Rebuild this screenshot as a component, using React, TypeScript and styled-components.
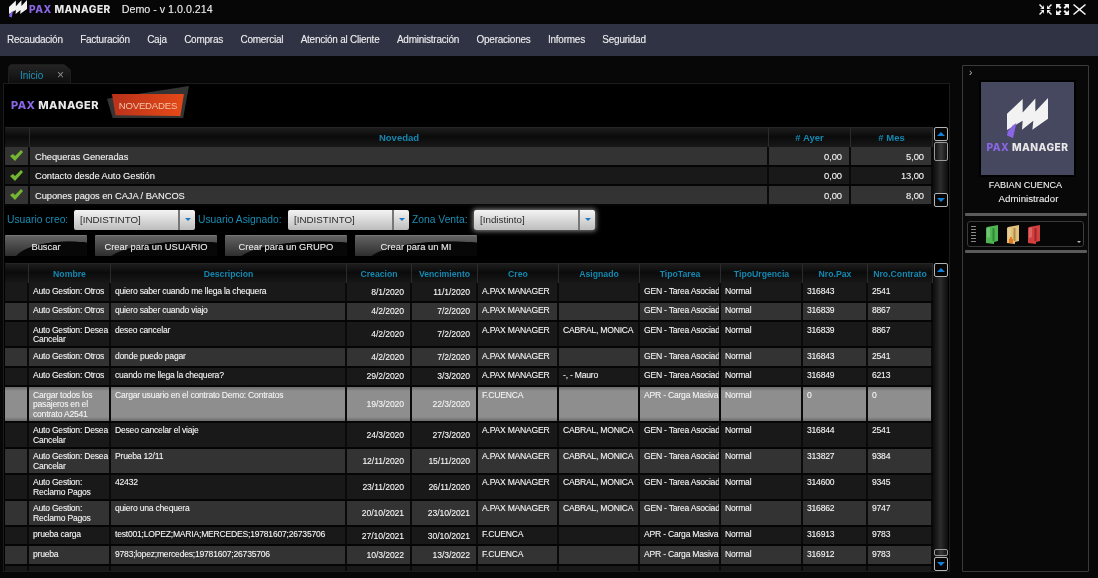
import React from "react";
import styled, { createGlobalStyle } from "styled-components";

const Global = createGlobalStyle`
  html, body { margin: 0; padding: 0; background: #000; }
  body { font-family: "Liberation Sans", Arial, sans-serif; }
  * { box-sizing: border-box; }
`;
const weight = "text-shadow: 0 0 0.7px rgba(255,255,255,.45);";

const Page = styled.div`
  width: 1098px; height: 578px; overflow: hidden; display: flex; flex-direction: column;
  background: #070707; color: #e6e6e6; filter: blur(0.3px);
`;
const TopBar = styled.header`
  height: 24px; flex: none; display: flex; align-items: center; padding: 0 12px 6px 9px; background: #060606;
`;
const Brand = styled.div`
  display: flex; align-items: center; gap: 2px;
`;
const Wordmark = styled.span<{ $size: number; $spacing: number }>`
  font-family: "Inter", sans-serif; font-weight: 800; white-space: nowrap; line-height: 1;
  font-size: ${p => p.$size}px; letter-spacing: ${p => p.$spacing}px; color: #e8e8e8;
  b { color: #8a66e6; font-weight: 800; }
`;
const AppTitle = styled.span`
  margin-left: 11px; font-size: 10.7px; color: #e4e4e4; ${weight}
`;
const WindowButtons = styled.div`
  margin-left: auto; display: flex; align-items: center; gap: 4px;
`;
const Nav = styled.nav`
  height: 32px; flex: none; display: flex; align-items: center; gap: 17.4px; padding: 0 0 2px 7px; background: #2f3344;
`;
const NavItem = styled.span`
  font-size: 10px; letter-spacing: -0.24px; color: #e8e8ea; white-space: nowrap; ${weight}
`;
const Body = styled.div`
  flex: 1; min-height: 0; display: flex; gap: 12px; padding: 8px 9px 6px 3px;
`;
const MainColumn = styled.div`
  width: 947px; flex: none; display: flex; flex-direction: column;
`;
const Tabs = styled.div`
  height: 19px; flex: none; display: flex; padding-left: 5px;
`;
const Tab = styled.div`
  width: 63px; display: flex; align-items: center; justify-content: space-between; padding: 2px 6px 0 11px;
  background: linear-gradient(#242424, #0e0e0e); border: 1px solid #1d1d1d; border-bottom: 0;
  clip-path: polygon(3px 0, 56px 0, 100% 6px, 100% 100%, 0 100%, 0 3px);
`;
const TabLabel = styled.span`
  font-size: 10px; color: #1f93b8;
`;
const TabClose = styled.span`
  font-size: 12px; color: #8e8e8e; line-height: 1;
`;
const Panel = styled.main`
  flex: 1; min-height: 0; display: flex; flex-direction: column; background: #000; border: 1px solid #1c1c1c;
  padding-left: 1px; overflow: hidden;
`;
const LogoRow = styled.div`
  height: 43px; flex: none; display: flex; align-items: center; padding: 0 0 0 6px; gap: 13px;
`;
const Banner = styled.div`
  position: relative; width: 72px; height: 22px; margin-top: -1px; flex: none;
  display: flex; align-items: center; justify-content: center; z-index: 0;
  font-size: 9.6px; letter-spacing: -0.2px; color: #f3c5a8;
  &::before {
    content: ""; position: absolute; z-index: -2; left: -5px; right: -5px; top: -8px; bottom: -2px;
    background: #343434; clip-path: polygon(0 40%, 100% 0, 93% 100%, 7% 100%);
  }
  &::after {
    content: ""; position: absolute; z-index: -1; inset: 0;
    background: linear-gradient(100deg, #b8311a, #e64a17); clip-path: polygon(0 0, 100% 0, 95% 100%, 5% 97%);
  }
`;
const GridWrap = styled.div<{ $height: number }>`
  height: ${p => p.$height}px; flex: none; display: flex;
`;
const GridBody = styled.div`
  width: 928px; flex: none; overflow: hidden; display: flex; flex-direction: column;
`;
const Row = styled.div<{ $cols: string; $tone?: "odd" | "even" | "sel" }>`
  display: grid; grid-template-columns: ${p => p.$cols}; flex: none; border-bottom: 2px solid #050505;
  background: ${p => (p.$tone === "even" ? "#333333" : p.$tone === "sel" ? "linear-gradient(#6a6a6a, #8e8e8e 4px, #8e8e8e calc(100% - 4px), #6a6a6a)" : "#191919")};
`;
const HeadRow = styled(Row)`
  height: 20px; background: linear-gradient(#1d1d1d, #0b0b0b 45%, #181818);
  border-top: 1px solid #252525; border-bottom: 0;
`;
const HeadCell = styled.div`
  display: flex; align-items: center; justify-content: center; border-right: 1px solid #2b2b2b;
  font-size: 8.7px; font-weight: 700; color: #1488b0; white-space: nowrap; overflow: hidden;
`;
const BigHeadCell = styled(HeadCell)`
  font-size: 9.5px;
`;
const Cell = styled.div<{ $right?: boolean; $clip?: boolean }>`
  font-size: 8.6px; letter-spacing: ${p => (p.$right ? "-0.08px" : "-0.23px")};
  line-height: 9.7px; color: #f0f0f0; border-right: 2px solid #0a0a0a; overflow: hidden;
  padding: ${p => (p.$right ? "2px 6px 0 0" : "3.6px 1px 1px 4px")};
  ${p => p.$right && "display:flex; align-items:center; justify-content:flex-end;"}
  ${p => p.$clip && "white-space:nowrap;"}
  min-height: 17.5px; ${weight}
`;
const NewsCell = styled.div<{ $right?: boolean; $check?: boolean }>`
  height: 17.6px; display: flex; align-items: center; font-size: 9.4px; letter-spacing: -0.08px; color: #ececec; border-right: 2px solid #0a0a0a; ${weight}
  justify-content: ${p => (p.$right ? "flex-end" : p.$check ? "center" : "flex-start")};
  padding: ${p => (p.$right ? "1px 7px 0 0" : p.$check ? "0" : "1px 0 0 5px")};
`;
const Scrollbar = styled.div`
  width: 15px; flex: none; display: flex; flex-direction: column; align-items: center;
  background: linear-gradient(90deg, #0c0c0c, #2c2c2c 50%, #0c0c0c);
`;
const ScrollButton = styled.div<{ $down?: boolean }>`
  width: 14px; height: 14px; flex: none; background: #050505; border: 1px solid #b4b4b4; border-radius: 2px;
  display: flex; align-items: center; justify-content: center;
  &::after {
    content: ""; border-left: 4px solid transparent; border-right: 4px solid transparent;
    ${p => (p.$down ? "border-top: 4px solid #1580d8;" : "border-bottom: 4px solid #1580d8;")}
  }
`;
const ScrollThumb = styled.div<{ $height: number }>`
  width: 14px; height: ${p => p.$height}px; flex: none; margin: 1px 0; border: 1px solid #9a9a9a; border-radius: 2px;
  background: linear-gradient(90deg, #111, #3a3a3a 50%, #111);
`;
const Spacer = styled.div`
  flex: 1;
`;
const Filters = styled.div`
  height: 25px; flex: none; display: flex; align-items: center; padding: 0 0 0 2px;
`;
const FilterLabel = styled.span<{ $width: number }>`
  width: ${p => p.$width}px; flex: none; font-size: 10.3px; color: #1a8db4; white-space: nowrap;
`;
const Select = styled.div<{ $glow?: boolean }>`
  width: 121px; height: 20px; flex: none; margin-right: 3px; display: flex; border-radius: 2px;
  background: linear-gradient(#f4f4f4, #bdbdbd); color: #2a2a2a; font-size: 9.8px;
  ${p => p.$glow && "box-shadow: 0 0 5px 1px rgba(255,255,255,.55);"}
`;
const SelectValue = styled.span`
  flex: 1; display: flex; align-items: center; padding-left: 6px;
`;
const SelectArrow = styled.span`
  width: 17px; flex: none; border-left: 2px solid #777; display: flex; align-items: center; justify-content: center;
  &::after {
    content: ""; border-left: 3.5px solid transparent; border-right: 3.5px solid transparent; border-top: 3.5px solid #1b78c4;
  }
`;
const Buttons = styled.div`
  height: 21px; flex: none; display: flex; gap: 8px; margin: 3px 0 7px;
`;
const ActionButton = styled.button<{ $width: number }>`
  width: ${p => p.$width}px; height: 21px; padding: 0; font-family: inherit; font-size: 9.4px; color: #e4e4e4; ${weight}
  border: 0; border-top: 1px solid #777; border-radius: 1px;
  background: radial-gradient(ellipse 72% 110% at 78% 130%, #070707 92%, transparent 95%), linear-gradient(#626262, #2e2e2e);
`;
const Side = styled.aside`
  width: 127px; flex: none; margin-top: 1px; border: 1px solid #3a3a3a; background: #080808;
  display: flex; flex-direction: column; align-items: center; padding: 0 2px; border-radius: 1px;
`;
const SideToggle = styled.div`
  align-self: flex-start; height: 14px; font-size: 10px; line-height: 13px; color: #bbb; padding-left: 4px;
`;
const Avatar = styled.div`
  width: 97px; height: 97px; flex: none; margin-left: 4px; border: 2px solid #000; background: #45485f;
  display: flex; flex-direction: column; align-items: center; justify-content: flex-end; gap: 4px; padding-bottom: 23px;
`;
const UserName = styled.div`
  margin-top: 2px; font-size: 9.1px; line-height: 13px; color: #e8e8e8; text-align: center; ${weight}
`;
const UserRole = styled.div`
  font-size: 9.7px; line-height: 13px; color: #e8e8e8; padding-left: 6px; ${weight}
`;
const SideBar = styled.div<{ $top?: number }>`
  width: 122px; height: 3px; flex: none; background: #5b5b5b; border-radius: 1px; margin-top: ${p => p.$top ?? 0}px;
`;
const Toolbar = styled.div`
  position: relative; width: 117px; height: 26px; flex: none; margin: 5px 0 3px; border: 1px solid #3a3a3a; border-radius: 3px;
  background: #060606; display: flex; align-items: center; padding-left: 3px; gap: 9px;
`;
const Grip = styled.div`
  width: 5px; height: 18px; flex: none; margin-right: 1px;
  background-image: radial-gradient(circle, #999 0.8px, transparent 1px); background-size: 2.5px 3px;
`;
const Caret = styled.span`
  position: absolute; right: 2px; bottom: 3px; border-left: 2.5px solid transparent; border-right: 2.5px solid transparent; border-top: 2.5px solid #bbb;
`;

const newsCols = "25px 739px 82px 82px";
const taskCols = "24px 82px 236px 65px 66px 81px 81px 81px 82px 65px 65px";

const Mark = ({ w }: { w: number }) => (
  <svg width={w} height={w * 0.98} viewBox="0 0 123 120">
    <path fill="#f2f2f2" d="M0 47 47 3V43L85 1V40L123 0V62L76 95 79 68 45 95 47 68 0 96Z" />
    <path fill="#8a66e6" d="M17 82 28 75 18 120 0 112 2 100Z" />
  </svg>
);
const Check = () => (
  <svg width="13" height="11" viewBox="0 0 13 11">
    <path fill="#74b531" d="M0 6 3 4 5 6 11 0 13 2 5 11Z" />
  </svg>
);
const Win = ({ d }: { d: string }) => (
  <svg width="13" height="11" viewBox="0 0 13 11"><path fill="#f2f2f2" d={d} /></svg>
);
const Folder = ({ a, b, lock }: { a: string; b: string; lock?: boolean }) => (
  <svg width="12" height="19" viewBox="0 0 12 19">
    <path fill={b} d="M1 2 12 0V16L8 17V19L0 18V3Z" />
    <path fill={a} d="M6.5 3H8.5V16H6.5Z" opacity=".6" />
    <path fill="#fff" d="M1 3 4 2.4V12L1 13Z" opacity=".2" />
    {lock && <path fill="#e8781e" d="M2 14H6V18H2ZM3 12H5V14H3Z" />}
  </svg>
);

const news = [
  ["Chequeras Generadas", "0,00", "5,00"],
  ["Contacto desde Auto Gestión", "0,00", "13,00"],
  ["Cupones pagos en CAJA / BANCOS", "0,00", "8,00"],
];
const GEN = "GEN - Tarea Asociada";
const APM = "A.PAX MANAGER";
const CM = "CABRAL, MONICA";
const AGO = "Auto Gestion: Otros";
const AGD = "Auto Gestion: Desea Cancelar";
const AGR = "Auto Gestion: Reclamo Pagos";
const tasks = [
  [AGO, "quiero saber cuando me llega la chequera", "8/1/2020", "11/1/2020", APM, "", GEN, "316843", "2541"],
  [AGO, "quiero saber cuando viajo", "4/2/2020", "7/2/2020", APM, "", GEN, "316839", "8867"],
  [AGD, "deseo cancelar", "4/2/2020", "7/2/2020", APM, CM, GEN, "316839", "8867"],
  [AGO, "donde puedo pagar", "4/2/2020", "7/2/2020", APM, "", GEN, "316843", "2541"],
  [AGO, "cuando me llega la chequera?", "29/2/2020", "3/3/2020", APM, "-, - Mauro", GEN, "316849", "6213"],
  ["Cargar todos los pasajeros en el contrato A2541", "Cargar usuario en el contrato Demo: Contratos", "19/3/2020", "22/3/2020", "F.CUENCA", "", "APR - Carga Masiva", "0", "0"],
  [AGD, "Deseo cancelar el viaje", "24/3/2020", "27/3/2020", APM, CM, GEN, "316844", "2541"],
  [AGD, "Prueba 12/11", "12/11/2020", "15/11/2020", APM, CM, GEN, "313827", "9384"],
  [AGR, "42432", "23/11/2020", "26/11/2020", APM, CM, GEN, "314600", "9345"],
  [AGR, "quiero una chequera", "20/10/2021", "23/10/2021", APM, CM, GEN, "316862", "9747"],
  ["prueba carga", "test001;LOPEZ;MARIA;MERCEDES;19781607;26735706", "27/10/2021", "30/10/2021", "F.CUENCA", "", "APR - Carga Masiva", "316913", "9783"],
  ["prueba", "9783;lopez;mercedes;19781607;26735706", "10/3/2022", "13/3/2022", "F.CUENCA", "", "APR - Carga Masiva", "316912", "9783"],
  ["", "", "", "", "", "", "", "", ""],
];
const heads = ["", "Nombre", "Descripcion", "Creacion", "Vencimiento", "Creo", "Asignado", "TipoTarea", "TipoUrgencia", "Nro.Pax", "Nro.Contrato"];

export default function App() {
  return (
    <Page>
      <Global />
      <TopBar>
        <Brand>
          <Mark w={18} />
          <Wordmark $size={10.2} $spacing={0.45}><b>PAX</b> MANAGER</Wordmark>
        </Brand>
        <AppTitle>Demo - v 1.0.0.214</AppTitle>
        <WindowButtons>
          <Win d="M1 0 4 3 5 1V5H1L3 4 0 1ZM12 0 9 3 8 1V5H12L10 4 13 1ZM1 11 4 8 5 10V6H1L3 7 0 10ZM12 11 9 8 8 10V6H12L10 7 13 10Z" />
          <Win d="M0 0H5L3.5 1.5 5.5 3.5 4 5 2 3 0 5ZM13 0H8L9.5 1.5 7.5 3.5 9 5 11 3 13 5ZM0 11H5L3.5 9.5 5.5 7.5 4 6 2 8 0 6ZM13 11H8L9.5 9.5 7.5 7.5 9 6 11 8 13 6Z" />
          <Win d="M1 0 6.5 4.5 12 0 13 1 7.7 5.5 13 10 12 11 6.5 6.5 1 11 0 10 5.3 5.5 0 1Z" />
        </WindowButtons>
      </TopBar>
      <Nav>
        {["Recaudación", "Facturación", "Caja", "Compras", "Comercial", "Atención al Cliente", "Administración", "Operaciones", "Informes", "Seguridad"].map(n => (
          <NavItem key={n}>{n}</NavItem>
        ))}
      </Nav>
      <Body>
        <MainColumn>
          <Tabs>
            <Tab><TabLabel>Inicio</TabLabel><TabClose>×</TabClose></Tab>
          </Tabs>
          <Panel>
            <LogoRow>
              <Wordmark $size={11} $spacing={0.45}><b>PAX</b> MANAGER</Wordmark>
              <Banner>NOVEDADES</Banner>
            </LogoRow>
            <GridWrap $height={80}>
              <GridBody>
                <HeadRow $cols={newsCols}>
                  <BigHeadCell />
                  <BigHeadCell>Novedad</BigHeadCell>
                  <BigHeadCell># Ayer</BigHeadCell>
                  <BigHeadCell># Mes</BigHeadCell>
                </HeadRow>
                {news.map((r, i) => (
                  <Row key={r[0]} $cols={newsCols} $tone={i % 2 ? "odd" : "even"}>
                    <NewsCell $check><Check /></NewsCell>
                    <NewsCell>{r[0]}</NewsCell>
                    <NewsCell $right>{r[1]}</NewsCell>
                    <NewsCell $right>{r[2]}</NewsCell>
                  </Row>
                ))}
              </GridBody>
              <Scrollbar>
                <ScrollButton />
                <ScrollThumb $height={19} />
                <Spacer />
                <ScrollButton $down />
              </Scrollbar>
            </GridWrap>
            <Filters>
              <FilterLabel $width={67}>Usuario creo:</FilterLabel>
              <Select><SelectValue>[INDISTINTO]</SelectValue><SelectArrow /></Select>
              <FilterLabel $width={90}>Usuario Asignado:</FilterLabel>
              <Select><SelectValue>[INDISTINTO]</SelectValue><SelectArrow /></Select>
              <FilterLabel $width={62}>Zona Venta:</FilterLabel>
              <Select $glow><SelectValue>[Indistinto]</SelectValue><SelectArrow /></Select>
            </Filters>
            <Buttons>
              <ActionButton $width={82}>Buscar</ActionButton>
              <ActionButton $width={122}>Crear para un USUARIO</ActionButton>
              <ActionButton $width={122}>Crear para un GRUPO</ActionButton>
              <ActionButton $width={122}>Crear para un MI</ActionButton>
            </Buttons>
            <GridWrap $height={308}>
              <GridBody>
                <HeadRow $cols={taskCols}>
                  {heads.map(h => <HeadCell key={h}>{h}</HeadCell>)}
                </HeadRow>
                {tasks.map((r, i) => (
                  <Row key={i} $cols={taskCols} $tone={i === 5 ? "sel" : i % 2 ? "even" : "odd"}>
                    <Cell />
                    <Cell>{r[0]}</Cell>
                    <Cell>{r[1]}</Cell>
                    <Cell $right>{r[2]}</Cell>
                    <Cell $right>{r[3]}</Cell>
                    <Cell $clip>{r[4]}</Cell>
                    <Cell $clip>{r[5]}</Cell>
                    <Cell $clip>{r[6]}</Cell>
                    <Cell $clip>{r[0] ? "Normal" : ""}</Cell>
                    <Cell $clip>{r[7]}</Cell>
                    <Cell $clip>{r[8]}</Cell>
                  </Row>
                ))}
              </GridBody>
              <Scrollbar>
                <ScrollButton />
                <Spacer />
                <ScrollThumb $height={7} />
                <ScrollButton $down />
              </Scrollbar>
            </GridWrap>
          </Panel>
        </MainColumn>
        <Side>
          <SideToggle>›</SideToggle>
          <Avatar>
            <Mark w={41} />
            <Wordmark $size={10.2} $spacing={0.45}><b>PAX</b> MANAGER</Wordmark>
          </Avatar>
          <UserName>FABIAN CUENCA</UserName>
          <UserRole>Administrador</UserRole>
          <SideBar $top={8} />
          <Toolbar>
            <Grip />
            <Folder a="#1c6a22" b="#4fb552" />
            <Folder a="#8a6a2c" b="#e0c07a" lock />
            <Folder a="#7a1515" b="#d23f3f" />
            <Caret />
          </Toolbar>
          <SideBar />
        </Side>
      </Body>
    </Page>
  );
}
